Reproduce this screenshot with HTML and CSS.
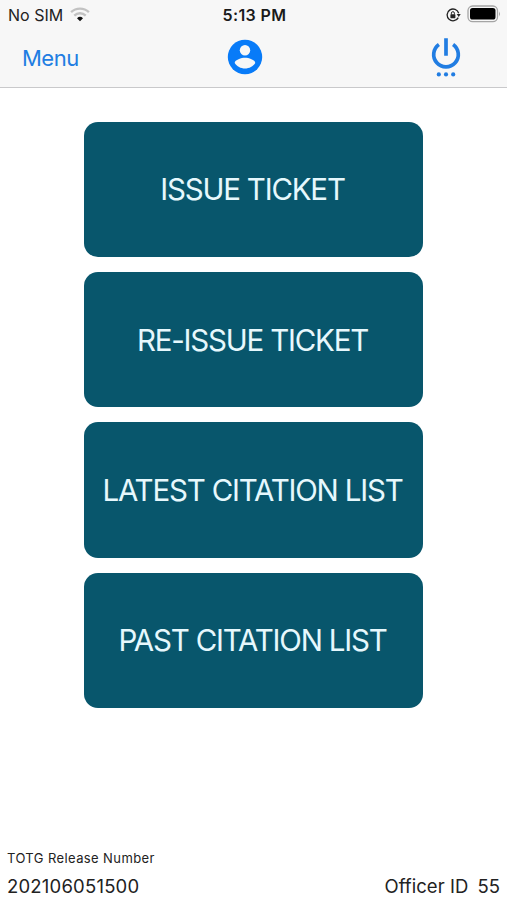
FILE: index.html
```html
<!DOCTYPE html>
<html lang="en">
<head>
<meta charset="utf-8">
<meta name="viewport" content="width=device-width, initial-scale=1">
<title>TOTG</title>
<link rel="stylesheet" href="styles.css">
</head>
<body>
<header class="header">
  <div class="status">
    <div class="status-left"><span class="carrier">No SIM</span>
      <svg class="wifi" width="20" height="15" viewBox="0 0 20 15" fill="none" stroke-width="2.3"><path d="M1.1 5.2a12.8 12.8 0 0 1 17.8 0M4.3 8.6a8.1 8.1 0 0 1 11.4 0" stroke="#c2c2c2"/><path d="M10 14.2 7 11.3a4.3 4.3 0 0 1 6 0z" fill="#111"/></svg>
    </div>
    <span class="time">5:13 PM</span>
    <div class="status-right">
      <svg width="15" height="14" viewBox="0 0 15 14" fill="none" stroke="#222"><path d="M12.3 9.6A5.9 5.9 0 1 1 12.7 5.2" stroke-width="1.3"/><path d="M10.7 6h4l-2 3z" fill="#222" stroke="none"/><rect x="4.4" y="6.3" width="5" height="3.9" rx=".6" fill="#222" stroke="none"/><path d="M5.4 6.5V5.2a1.5 1.5 0 0 1 3 0v1.3" stroke-width="1"/></svg>
      <svg class="battery" width="34" height="18" viewBox="0 0 34 18"><rect x="1" y="1" width="29.5" height="15.6" rx="4.6" fill="#f7f7f7" stroke="#a5a5a5" stroke-width="1.3"/><rect x="3" y="3" width="25.5" height="11.6" rx="2.6" fill="#000"/><path d="M32 6.2q1.8 2.6 0 5.2z" fill="#999"/></svg>
    </div>
  </div>
  <nav class="nav">
    <a class="menu">Menu</a>
    <svg class="user" width="36" height="36" viewBox="0 0 36 36"><circle cx="18" cy="18" r="17.2" fill="#087bf8"/><circle cx="18" cy="11.3" r="5.2" fill="#f7f7f7"/><path d="M7.7 24.1c0-3.4 6.8-5.3 10.3-5.3s10.3 1.9 10.3 5.3c-2.2 3.3-6 5.5-10.3 5.5s-8.1-2.2-10.3-5.5z" fill="#f7f7f7"/></svg>
    <svg class="power" width="30" height="40" viewBox="0 0 30 40"><path d="M7.9 6.5a12.3 12.3 0 1 0 14.2 0M15 .3v17.4" fill="none" stroke="#217de2" stroke-width="3.7"/><g fill="#217de2"><circle cx="7.8" cy="36.4" r="2.1"/><circle cx="15" cy="36.4" r="2.1"/><circle cx="22.2" cy="36.4" r="2.1"/></g></svg>
  </nav>
</header>
<main class="actions">
  <button class="action">ISSUE TICKET</button>
  <button class="action">RE-ISSUE TICKET</button>
  <button class="action">LATEST CITATION LIST</button>
  <button class="action">PAST CITATION LIST</button>
</main>
<footer class="footer">
  <div><div class="release-label">TOTG Release Number</div><div class="value">202106051500</div></div>
  <div class="value officer"><span>Officer ID</span><span>55</span></div>
</footer>
</body>
</html>
```
FILE: styles.css
```css
* { box-sizing: border-box; }
body { margin: 0; height: 900px; display: flex; flex-direction: column; overflow: hidden; background: #fff; color: #222; font-family: Inter, "Liberation Sans", sans-serif; }
.header { height: 88px; flex: none; background: #f7f7f7; border-bottom: 1px solid #c9c9cb; }
.status { height: 29px; padding: 0 6px 0 8px; display: grid; grid-template-columns: 1fr auto 1fr; align-items: center; font-size: 16px; line-height: 20px; }
.status-left { display: flex; align-items: center; gap: 7px; }
.time { font-weight: 600; letter-spacing: .4px; color: #1a1a1a; }
.status-right { display: flex; align-items: center; justify-content: flex-end; gap: 6px; }
.battery { position: relative; top: -1px; }
.nav { height: 58px; display: grid; grid-template-columns: 205px 36px 1fr; padding: 0 46px 0 22px; align-items: center; }
.menu { font-size: 22px; line-height: 28px; letter-spacing: -.5px; color: #217de2; }
.user { margin-top: -2px; }
.power { justify-self: end; margin-top: -1px; }
.actions { padding: 33.5px 84px 0 83.5px; display: flex; flex-direction: column; gap: 15px; }
.action { height: 135.4px; padding: 0 1.5px 0 0; border: 0; border-radius: 14px; background: #08566c; color: #e6f8fd; font: 400 29.5px/36px Inter, "Liberation Sans", sans-serif; letter-spacing: -1.2px; white-space: nowrap; }
.footer { margin-top: auto; height: 51px; padding: 0 7px; display: flex; justify-content: space-between; align-items: flex-start; }
.release-label { font-size: 13px; line-height: 18px; letter-spacing: .4px; }
.value { font-size: 18.5px; line-height: 22px; letter-spacing: .2px; margin-top: 8px; }
.officer { margin-top: 26px; display: flex; gap: 9px; letter-spacing: .05px; }
```
